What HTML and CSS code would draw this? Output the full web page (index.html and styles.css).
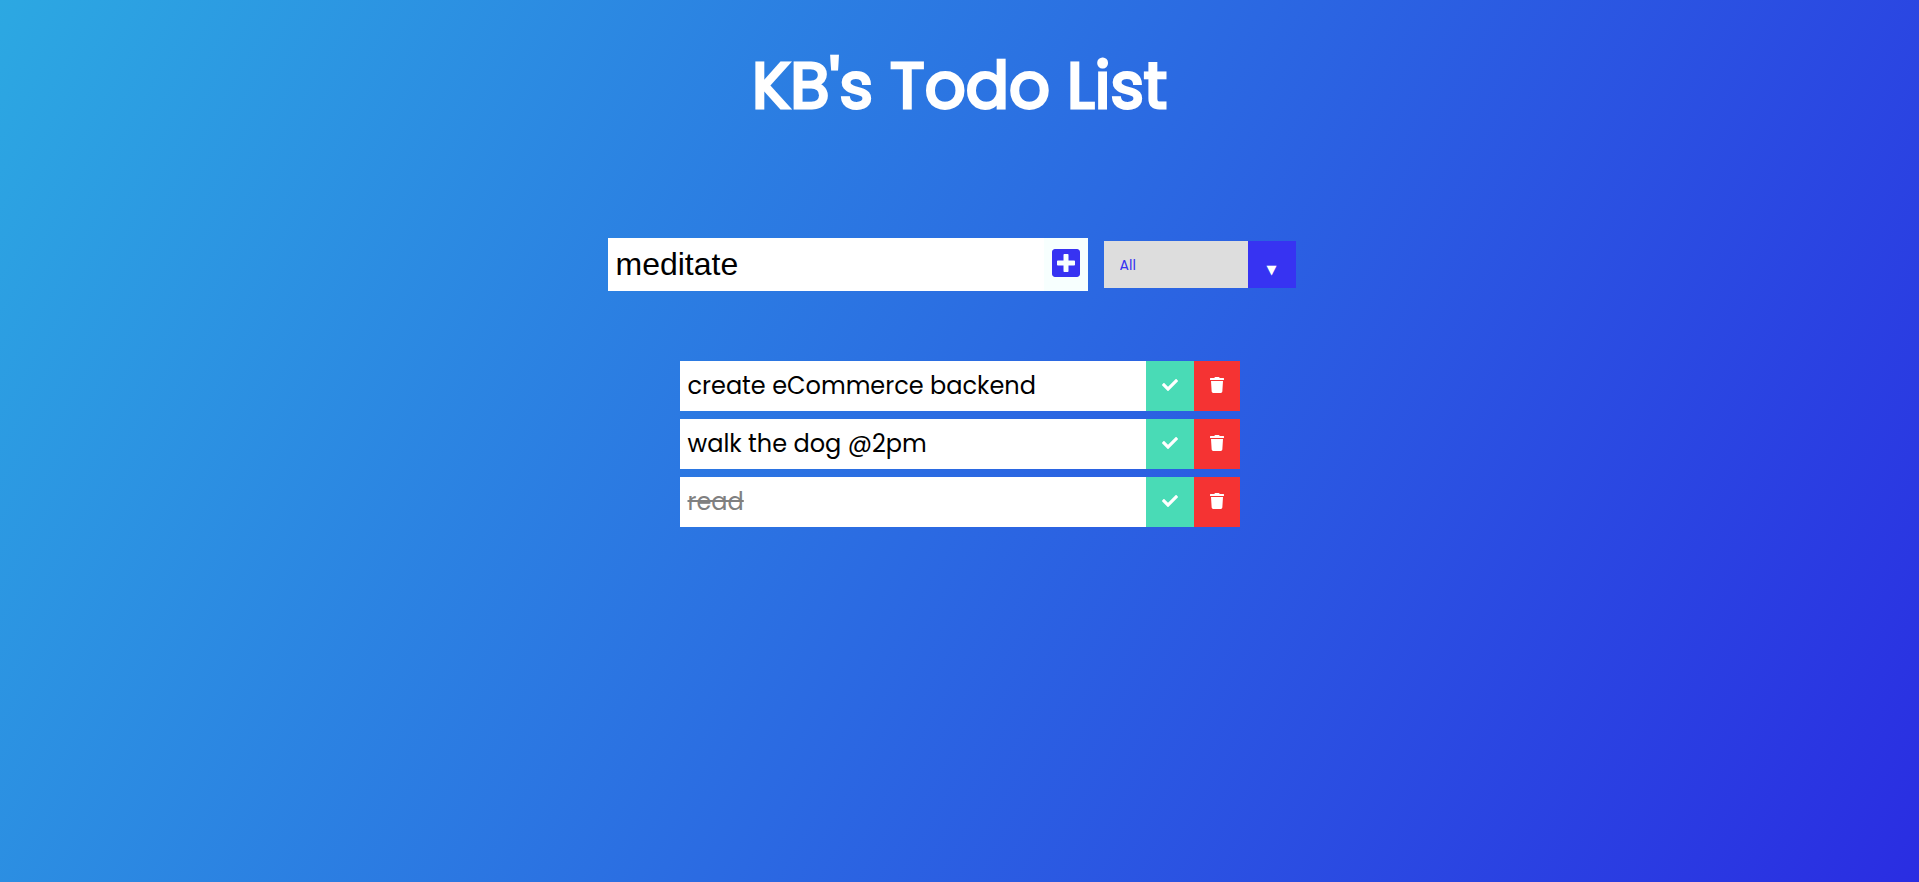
FILE: index.html
```html
<!DOCTYPE html>
<html lang="en">
<head>
<meta charset="utf-8">
<meta name="viewport" content="width=device-width, initial-scale=1">
<title>KB's Todo List</title>
<link rel="stylesheet" href="styles.css">
</head>
<body>
<svg class="sprite" aria-hidden="true">
  <symbol id="plus" viewBox="0 0 448 448"><path d="M400 0H48C21.500 0 0 21.500 0 48v352c0 26.500 21.500 48 48 48h352c26.500 0 48-21.500 48-48V48c0-26.500-21.500-48-48-48zm-32 252c0 6.600-5.400 12-12 12h-92v92c0 6.600-5.400 12-12 12h-56c-6.600 0-12-5.400-12-12v-92H92c-6.600 0-12-5.400-12-12v-56c0-6.600 5.400-12 12-12h92V92c0-6.600 5.400-12 12-12h56c6.600 0 12 5.400 12 12v92h92c6.600 0 12 5.400 12 12v56z"/></symbol>
  <symbol id="check" viewBox="0 0 512 512"><path d="M173.898 439.404l-166.400-166.400c-9.997-9.997-9.997-26.206 0-36.204l36.203-36.204c9.997-9.998 26.207-9.998 36.204 0L192 312.690 432.095 72.596c9.997-9.997 26.207-9.997 36.204 0l36.203 36.204c9.997 9.997 9.997 26.206 0 36.204l-294.400 294.401c-9.998 9.997-26.207 9.997-36.204-.001z"/></symbol>
  <symbol id="trash" viewBox="0 0 448 512"><path d="M432 32H312l-9.400-18.700A24 24 0 0 0 281.100 0H166.800a23.720 23.720 0 0 0-21.400 13.300L136 32H16A16 16 0 0 0 0 48v32a16 16 0 0 0 16 16h416a16 16 0 0 0 16-16V48a16 16 0 0 0-16-16zM53.200 467a48 48 0 0 0 47.900 45h245.800a48 48 0 0 0 47.900-45L416 128H32z"/></symbol>
</svg>
<header class="header"><h1 class="title">KB's Todo List</h1></header>
<main>
  <form class="todo-form">
    <input class="todo-input" type="text" value="meditate" aria-label="New todo">
    <button class="add-button" type="submit" aria-label="Add todo"><svg class="icon-large"><use href="#plus"/></svg></button>
    <div class="select">
      <select class="filter" aria-label="Filter todos">
        <option>All</option>
        <option>Completed</option>
        <option>Uncompleted</option>
      </select>
      <span class="arrow" aria-hidden="true">▼</span>
    </div>
  </form>
  <ul class="todo-list">
    <li class="todo">
      <span class="todo-text">create eCommerce backend</span>
      <button class="complete" type="button" aria-label="Complete"><svg class="icon"><use href="#check"/></svg></button>
      <button class="trash" type="button" aria-label="Delete"><svg class="icon icon-trash"><use href="#trash"/></svg></button>
    </li>
    <li class="todo">
      <span class="todo-text">walk the dog @2pm</span>
      <button class="complete" type="button" aria-label="Complete"><svg class="icon"><use href="#check"/></svg></button>
      <button class="trash" type="button" aria-label="Delete"><svg class="icon icon-trash"><use href="#trash"/></svg></button>
    </li>
    <li class="todo">
      <span class="todo-text completed">read</span>
      <button class="complete" type="button" aria-label="Complete"><svg class="icon"><use href="#check"/></svg></button>
      <button class="trash" type="button" aria-label="Delete"><svg class="icon icon-trash"><use href="#trash"/></svg></button>
    </li>
  </ul>
</main>
</body>
</html>
```

FILE: styles.css
```css
* {
  margin: 0;
  padding: 0;
  box-sizing: border-box;
}

body {
  min-height: 100vh;
  background-image: linear-gradient(120deg, #2ca8e2, #2a2de2);
  color: #fff;
  font-family: Poppins, Inter, sans-serif;
}

.sprite {
  display: none;
}

.header {
  display: flex;
  justify-content: center;
  padding: 36px 16px;
}

.title {
  font-size: 64px;
  line-height: 100px;
  font-weight: 400;
  -webkit-text-stroke: 3px #fff;
}

.todo-form {
  display: flex;
  justify-content: center;
  padding: 66px 16px 0;
}

.todo-input,
.add-button {
  height: 53px;
  border: none;
  border-radius: 0;
}

.todo-input {
  width: 436px;
  padding: 8px;
  background: #fff;
  color: #000;
  font: 32px "Liberation Sans", Arial, sans-serif;
  outline: none;
}

.add-button {
  display: flex;
  align-items: center;
  justify-content: center;
  width: 44px;
  padding-bottom: 3px;
  background: #f7fffe;
  color: #3733f2;
  cursor: pointer;
}

.icon-large {
  width: 28px;
  height: 28px;
  fill: currentColor;
}

.select {
  position: relative;
  display: flex;
  align-self: center;
  width: 192px;
  height: 47px;
  margin: 0 16px;
}

.filter {
  width: 100%;
  padding: 0 16px;
  border: none;
  border-radius: 0;
  appearance: none;
  background: #ddd;
  color: #3733f2;
  font: 14px Poppins, Inter, sans-serif;
  outline: none;
  cursor: pointer;
}

.arrow {
  position: absolute;
  top: 0;
  right: 0;
  display: flex;
  align-items: center;
  justify-content: center;
  width: 48px;
  height: 100%;
  padding-top: 10px;
  background: #3733f2;
  font: 13px "DejaVu Sans", sans-serif;
  pointer-events: none;
}

.todo-list {
  width: 100%;
  max-width: 560px;
  margin: 70px auto 0;
  list-style: none;
}

.todo {
  display: flex;
  height: 50px;
  margin-bottom: 8px;
  background: #fff;
  color: #000;
  font-size: 24px;
}

.todo-text {
  flex: 1;
  padding: 0 8px;
  line-height: 50px;
}

.completed {
  color: #808080;
  text-decoration: line-through;
}

.complete,
.trash {
  display: flex;
  align-items: center;
  justify-content: center;
  width: 48px;
  padding-bottom: 2px;
  border: none;
  background: #49dbb6;
  color: #fff;
  cursor: pointer;
}

.trash {
  width: 46px;
  background: #f53333;
}

.icon {
  width: 16px;
  height: 16px;
  fill: currentColor;
}

.icon-trash {
  width: 14px;
}
```
